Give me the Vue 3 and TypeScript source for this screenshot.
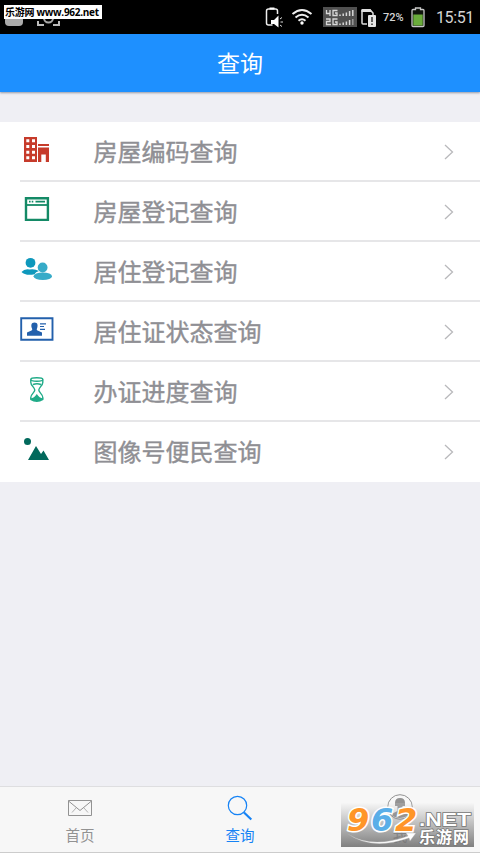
<script setup lang="ts">
import { ref } from 'vue'

type IconName = 'building' | 'window' | 'people' | 'card' | 'hourglass' | 'picture'

interface QueryItem {
  icon: IconName
  label: string
}

const items: QueryItem[] = [
  { icon: 'building', label: '房屋编码查询' },
  { icon: 'window', label: '房屋登记查询' },
  { icon: 'people', label: '居住登记查询' },
  { icon: 'card', label: '居住证状态查询' },
  { icon: 'hourglass', label: '办证进度查询' },
  { icon: 'picture', label: '图像号便民查询' },
]

const activeTab = ref<'home' | 'query' | 'me'>('query')
</script>

<template>
  <div class="screen">
    <div class="status">
      <svg class="notices" width="64" height="34" viewBox="0 0 64 34">
        <rect x="5" y="16" width="18" height="10" rx="4" fill="#aaa" />
        <path d="M38 21v4h6M59 21v4h-6" fill="none" stroke="#bbb" stroke-width="2" />
        <circle cx="48.500" cy="18" r="4.500" fill="none" stroke="#aaa" stroke-width="2" />
      </svg>
      <span class="site-tag">乐游网 www.962.net</span>
      <div class="system">
        <svg class="signals" width="121" height="34" viewBox="-1 0 121 34">
          <path d="M13.500 14v-3q0-2-2-2h-7q-2 0-2 2v12q0 2 2 2h4" fill="none" stroke="#eee" stroke-width="1.500" />
          <path d="M5.500 8.500h5" stroke="#fff" stroke-width="2" />
          <path d="M7 20h3l4.500-4.500v12L10 24H7z" fill="#fff" />
          <path d="M16 19l2-1.500M16.500 22h2.500M16 25l2 1.500" stroke="#ddd" stroke-width="1" />
          <g fill="none" stroke="#eee" stroke-width="2">
            <path d="M28.500 14q9.500-8 19 0" />
            <path d="M31.500 17.500q6.500-5.500 13 0" />
            <path d="M34.500 20.800q3.500-3 7 0" />
          </g>
          <circle cx="38" cy="23" r="1.700" fill="#fff" />
          <rect x="59" y="7" width="34" height="20" fill="#505050" />
          <g fill="none" stroke="#d8d8d8" stroke-width="1.300">
            <path d="M62.500 10v3.500h4M66 10v6M73.500 10.500H69v5h4v-2.500h-2" />
            <path d="M62 19h4v2.500h-3.500v3H67M73.500 19H69v5.500h4V22h-2" />
          </g>
          <g stroke="#d8d8d8" stroke-width="1.500">
            <path d="M76 16v-1.500M79.200 16v-2.500M82.400 16v-3.500M85.600 16v-5M88.800 16v-6" />
            <path d="M76 25v-1.500M79.200 25v-2.500M82.400 25v-3.500M85.600 25v-5" />
            <path d="M88.800 25v-6" stroke="#999" />
          </g>
          <path d="M98 10h8l3 3v2M98 10v13q0 1 1 1h4" fill="none" stroke="#ddd" stroke-width="1.500" />
          <path d="M97.500 9h9l2 3h-11z" fill="#ddd" />
          <rect x="104" y="15" width="8" height="12" rx="1" fill="#e4e4e4" />
          <path d="M108 17v5M108 23.500v1.500" stroke="#333" stroke-width="1.500" />
        </svg>
        <span class="percent">72%</span>
        <svg class="battery" width="14" height="21" viewBox="0 0 14 21">
          <path d="M4.500 2.500v-1.500h5v1.500h2.500q1 0 1 1v15q0 1-1 1H2q-1 0-1-1v-15q0-1 1-1z" fill="#10150d" stroke="#c8c8c8" stroke-width="1.300" />
          <rect x="2.300" y="7.500" width="9.400" height="11" fill="#6aac3b" />
        </svg>
        <span class="clock">15:51</span>
      </div>
    </div>

    <header class="title-bar">查询</header>

    <ul class="list">
      <li v-for="item in items" :key="item.icon" class="row">
        <svg class="icon" width="36" height="34" viewBox="0 0 36 34">
          <template v-if="item.icon === 'building'">
            <path d="M4 5h13v25H4z" fill="#c63b2b" />
            <path d="M6.300 7.300h3v3h-3zM12 7.300h3v3h-3zM6.300 13h3v3h-3zM12 13h3v3h-3zM6.300 18.700h3v3h-3zM12 18.700h3v3h-3zM6.300 24.300h3v3h-3zM12 24.300h3v3h-3z" fill="#fff" />
            <path d="M18 12h11v2H18zM18 15.500h11V30h-3.200v-7.500h-4.500V30H18z" fill="#c63b2b" />
          </template>
          <template v-else-if="item.icon === 'window'">
            <path d="M6 6.200h21.900v21.700H6z" fill="none" stroke="#148a66" stroke-width="2.400" />
            <path d="M6 13h21.900" stroke="#148a66" stroke-width="1.800" />
            <path d="M9 9.700h1.600M11.700 9.700h1.600M15.500 9.700h9.500" stroke="#148a66" stroke-width="1.700" />
          </template>
          <template v-else-if="item.icon === 'people'">
            <ellipse cx="22.800" cy="24.300" rx="9.200" ry="3.800" fill="#36abc8" />
            <circle cx="22.600" cy="15.500" r="4.900" fill="#36abc8" />
            <path d="M1.500 20q3-3.500 8-2.500 5-1 9.500 1.500-3.500 1-4.500 3.300-9 1.700-13-2.300" fill="#0e98bc" />
            <circle cx="10.500" cy="10.800" r="4.900" fill="#0e98bc" />
          </template>
          <template v-else-if="item.icon === 'card'">
            <path d="M1.200 6.200h31.300v21.500H1.200z" fill="none" stroke="#2360ac" stroke-width="1.900" />
            <path d="M14.500 10.500c3.400 0 3.500 3 2.700 5.500-.5 1.200-.8 2 .3 2.500l4.500 2v3.300H7v-3.300l4.500-2c1.100-.5.800-1.300.3-2.500-.8-2.500-.7-5.500 2.700-5.500z" fill="#2360ac" />
            <path d="M20 11.800h6M20 14.500h4M20 17.300h5" stroke="#2360ac" stroke-width="1.200" />
          </template>
          <template v-else-if="item.icon === 'hourglass'">
            <g fill="none" stroke="#20ab88" stroke-width="1.400">
              <ellipse cx="16.800" cy="7.500" rx="6" ry="1.700" />
              <path d="M10.800 7.500v3c0 3 4 5 4 7.500s-4 4-4 7.500v2M22.800 7.500v3c0 3-4 5-4 7.500s4 4 4 7.500v2M13 12.500q4-1.500 8 0" />
            </g>
            <path d="M10.300 26.500q4-.5 6.500-4.500 2.500 4 6.500 4.500v1.500q-6.500 4-13 0z" fill="#20ab88" />
          </template>
          <template v-else>
            <circle cx="7.500" cy="9.500" r="3.500" fill="#02695c" />
            <path d="M8 28l8-14 5 8 2.500-3.500L29 28z" fill="#02695c" />
          </template>
        </svg>
        <span class="label">{{ item.label }}</span>
        <svg class="chevron" width="10" height="16" viewBox="0 0 10 16">
          <path d="M1 1l7.500 7L1 15" fill="none" stroke="#b9b9bc" stroke-width="1.300" />
        </svg>
      </li>
    </ul>

    <nav class="tabs">
      <button class="tab" :class="{ active: activeTab === 'home' }" @click="activeTab = 'home'">
        <svg width="28" height="28" viewBox="0 0 28 28" fill="none" stroke="currentColor">
          <path d="M2.500 6.500h23v15h-23z" />
          <path d="M2.500 7l11.500 9.500L25.500 7" />
          <path d="M6 18.500l4-4.500M22 18.500l-4-4.500" stroke-width=".7" />
        </svg>
        <span>首页</span>
      </button>
      <button class="tab" :class="{ active: activeTab === 'query' }" @click="activeTab = 'query'">
        <svg width="28" height="28" viewBox="0 0 28 28" fill="none" stroke="currentColor">
          <circle cx="11.500" cy="11.500" r="9.200" stroke-width="1.200" />
          <path d="M18 18.500l7.300 7" stroke-width="2.200" />
        </svg>
        <span>查询</span>
      </button>
      <button class="tab" :class="{ active: activeTab === 'me' }" @click="activeTab = 'me'">
        <svg width="28" height="28" viewBox="0 0 28 28" fill="none" stroke="currentColor">
          <circle cx="14" cy="13" r="12.300" />
          <path d="M9 9q0-5 5-5t5 5v3H9zM11.500 12v5l-7 3.500q9 7 19 0l-7-3.500v-5z" fill="currentColor" stroke="none" />
        </svg>
        <span>我</span>
      </button>
    </nav>

    <div class="watermark">
      <svg width="133" height="44" viewBox="0 0 133 44">
        <path d="M7 31q24 15 60 2l-2-3 10 0-6 8-1-3Q31 48 7 31z" fill="#fff" stroke="#aaa" stroke-width=".4" />
        <g class="digits">
          <text x="6" y="28" fill="#ff9528">9</text>
          <text x="30" y="28" fill="#5aaee8">6</text>
          <text x="54" y="28" fill="#ff9528">2</text>
        </g>
        <text class="net" x="78" y="22.500" textLength="52" lengthAdjust="spacingAndGlyphs">.NET</text>
        <text class="name" x="78" y="40" textLength="50">乐游网</text>
      </svg>
    </div>
  </div>
</template>

<style>
body {
  margin: 0;
  background: #efeff4;
}
</style>

<style scoped>
.screen {
  position: relative;
  display: flex;
  flex-direction: column;
  width: 480px;
  height: 853px;
  overflow: hidden;
  background: #efeff4;
  font-family: Roboto, 'Noto Sans CJK SC', sans-serif;
}
.status {
  position: relative;
  display: flex;
  justify-content: space-between;
  flex: none;
  height: 34px;
  background: #000;
  color: #d4d4d4;
}
.site-tag {
  position: absolute;
  left: 4px;
  top: 5px;
  width: 98px;
  height: 14px;
  box-sizing: border-box;
  padding-left: 1px;
  background: #fff;
  color: #000;
  font: 700 10px/15px 'Open Sans', 'Noto Sans CJK SC', sans-serif;
  letter-spacing: -0.28px;
  white-space: nowrap;
}
.system {
  display: flex;
  align-items: center;
  padding-right: 6px;
}
.signals {
  margin-right: -1px;
}
.percent {
  width: 28px;
  font-size: 11px;
  font-weight: 500;
}
.battery {
  margin-right: 11px;
}
.clock {
  width: 38px;
  padding-top: 2px;
  font-size: 16px;
  line-height: 34px;
  letter-spacing: -0.4px;
  white-space: nowrap;
}
.title-bar {
  flex: none;
  box-sizing: border-box;
  height: 58px;
  padding-top: 3px;
  background: #1e90ff;
  box-shadow: 0 1px 2px rgba(60, 70, 90, 0.5);
  color: #fff;
  font-size: 23px;
  line-height: 55px;
  text-align: center;
}
.list {
  flex: none;
  margin: 30px 0 0;
  padding: 0;
  list-style: none;
  background: #fff;
}
.row {
  display: flex;
  height: 58px;
  margin-left: 20px;
  padding-right: 26px;
  border-bottom: 2px solid #e6e6e8;
  align-items: center;
}
.row:last-child {
  border-bottom-color: transparent;
}
.icon {
  margin-right: 37.5px;
  margin-top: -4px;
}
.label {
  flex: 1;
  padding-top: 4px;
  color: #8f8f94;
  font-size: 24px;
  line-height: 54px;
  -webkit-text-stroke: 0.4px #8f8f94;
}
.chevron {
  margin-top: 2px;
}
.tabs {
  display: flex;
  flex: none;
  box-sizing: border-box;
  height: 67px;
  margin-top: auto;
  border-top: 1px solid #dedee0;
  border-bottom: 1px solid #ccc;
  background: #f7f7f7;
}
.tab {
  display: flex;
  flex: 1;
  flex-direction: column;
  align-items: center;
  padding: 7px 0 0;
  border: 0;
  background: none;
  color: #929292;
  font: 14.5px/26px 'Noto Sans CJK SC', sans-serif;
}
.tab.active {
  color: #1683f5;
}
.watermark {
  position: absolute;
  left: 341px;
  top: 803px;
  width: 133px;
  height: 44px;
  background: linear-gradient(rgba(240, 240, 240, 0.15), rgba(115, 115, 115, 0.9));
}
.digits text {
  font: italic 700 32px 'DejaVu Sans', sans-serif;
  stroke: #fff;
  stroke-width: 3px;
  paint-order: stroke;
}
.net,
.name {
  font: 700 19px 'Liberation Sans', sans-serif;
  fill: #fff;
  stroke: #777;
  stroke-width: 1.5px;
  paint-order: stroke;
}
.name {
  font: 700 16px 'Noto Sans CJK SC', sans-serif;
}
</style>
